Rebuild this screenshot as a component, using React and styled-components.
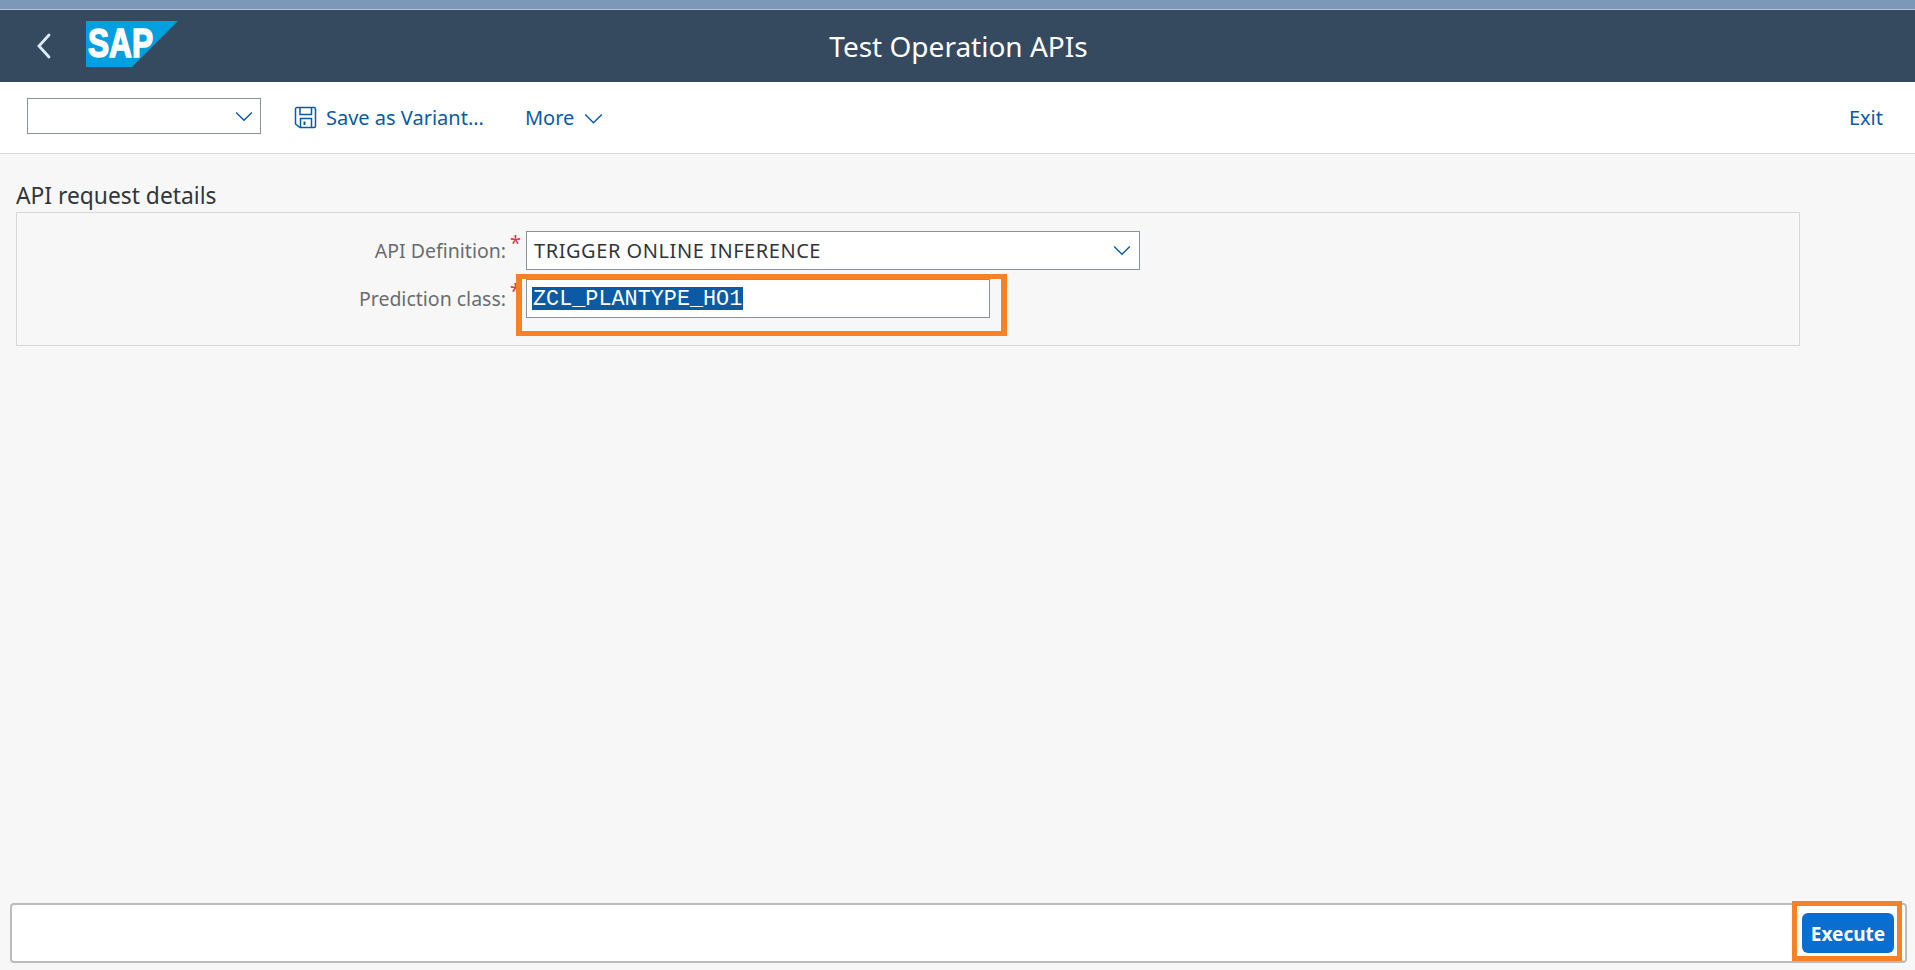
import styled, { createGlobalStyle } from "styled-components";

const GlobalStyle = createGlobalStyle`
  html, body {
    margin: 0;
    padding: 0;
    background: #f7f7f7;
  }
  body {
    font-family: "Noto Sans", "Open Sans", sans-serif;
  }
`;

const Page = styled.div`
  height: 970px;
  display: flex;
  flex-direction: column;
  overflow: hidden;
`;

const TopStrip = styled.div`
  height: 9px;
  background: #7b98b8;
  border-bottom: 1px solid #b4c4d6;
`;

const Header = styled.header`
  height: 72px;
  background: #354a5f;
  display: flex;
  align-items: center;
  padding-left: 36px;
`;

const BackButton = styled.svg`
  width: 16px;
  height: 26px;
  margin-right: 34px;
`;

const Logo = styled.svg`
  width: 92px;
  height: 46px;
  margin-bottom: 4px;
`;

const Title = styled.h1`
  flex: 1;
  margin: 0;
  padding-right: 176px;
  text-align: center;
  color: #fff;
  font-size: 28px;
  font-weight: 400;
  line-height: 72px;
`;

const Toolbar = styled.div`
  height: 71px;
  background: #fff;
  border-bottom: 1px solid #d9d9d9;
  display: flex;
  align-items: center;
  padding: 0 32px 0 27px;
`;

const VariantSelect = styled.div`
  width: 234px;
  height: 36px;
  box-sizing: border-box;
  background: #fff;
  border: 1px solid #89919a;
  display: flex;
  align-items: center;
  justify-content: flex-end;
  padding-right: 7px;
  margin: 0 33px 3px 0;
`;

const Action = styled.span`
  color: #0a5aa4;
  font-size: 20px;
  line-height: 36px;
  display: flex;
  align-items: center;
  gap: ${({ $gap }) => $gap || 0}px;
  margin-right: ${({ $right }) => $right || 0}px;
  margin-left: ${({ $auto }) => ($auto ? "auto" : 0)};
`;

const Content = styled.main`
  flex: 1;
  padding: 25px 115px 0 16px;
`;

const SectionTitle = styled.h2`
  margin: 0;
  color: #32363a;
  font-size: 22.8px;
  font-weight: 400;
  line-height: 33px;
`;

const Panel = styled.section`
  height: 134px;
  box-sizing: border-box;
  border: 1px solid #d9d9d9;
  padding-top: 18px;
  display: grid;
  grid-template-columns: 489px 20px auto;
  grid-auto-rows: 39px;
  row-gap: 9px;
  justify-content: start;
  align-items: start;
`;

const Label = styled.label`
  text-align: right;
  color: #6a6d70;
  font-size: 19.5px;
  line-height: 40px;
`;

const Required = styled.span`
  color: #d9364c;
  font-size: 20px;
  line-height: 24px;
  padding-left: 4px;
`;

const Field = styled.div`
  position: relative;
  width: ${({ $width }) => $width}px;
  height: ${({ $height }) => $height}px;
  box-sizing: border-box;
  background: #fff;
  border: 1px solid #89919a;
  display: flex;
  align-items: center;
  justify-content: space-between;
  padding: 0 8px 0 7px;
  color: #32363a;
  font-size: 20px;
  letter-spacing: 0.55px;
`;

const MonoValue = styled.span`
  margin-left: -2px;
  height: 23px;
  line-height: 25px;
  padding: 0 1px;
  background: #0a5aa4;
  color: #fff;
  font-family: "Liberation Mono", monospace;
  font-size: 21.8px;
  letter-spacing: 0;
`;

const Highlight = styled.div`
  position: absolute;
  top: ${({ $top }) => $top}px;
  right: ${({ $right }) => $right}px;
  bottom: ${({ $bottom }) => $bottom}px;
  left: ${({ $left }) => $left}px;
  border: 5px solid #f88125;
  border-left-width: ${({ $side }) => $side}px;
  border-right-width: ${({ $side }) => $side}px;
  pointer-events: none;
`;

const Footer = styled.footer`
  height: 60px;
  box-sizing: border-box;
  margin: 0 8px 7px 10px;
  background: #fff;
  border: 2px solid #bcbcbc;
  border-radius: 4px;
  display: flex;
  align-items: center;
  justify-content: flex-end;
  padding-right: 11px;
`;

const ExecuteWrap = styled.div`
  position: relative;
  display: flex;
`;

const ExecuteButton = styled.button`
  width: 92px;
  height: 40px;
  border: 0;
  border-radius: 6px;
  background: #0a6ed1;
  color: #fff;
  font-family: inherit;
  font-size: 19px;
  font-weight: 700;
  padding: 2px 0 0;
`;

const Chevron = ({ size = 18 }) => (
  <svg width={size} height={size * 0.6} viewBox="0 0 18 11" fill="none">
    <path d="M1 1.5 L9 9.5 L17 1.5" stroke="#0a5aa4" strokeWidth="1.4" />
  </svg>
);

const MoreChevron = styled.span`
  display: flex;
  padding-top: 3px;
`;

const SaveIcon = () => (
  <svg width="23" height="23" viewBox="0 0 23 23" fill="none" stroke="#0a5aa4" strokeWidth="1.5">
    <path d="M3 1.5 H20 A1.5 1.5 0 0 1 21.5 3 V20 A1.5 1.5 0 0 1 20 21.5 H6 L1.5 18 V3 A1.5 1.5 0 0 1 3 1.5 Z" />
    <path d="M6 1.5 V8.5 H17.5 V1.5" />
    <path d="M6.5 21.5 V12.5 H17.5 V21.5" />
    <path d="M10.5 15.5 V19" strokeWidth="2" />
  </svg>
);

const App = () => (
  <Page>
    <GlobalStyle />
    <TopStrip />
    <Header>
      <BackButton viewBox="0 0 16 26" fill="none">
        <path d="M13 2 L3 13 L13 24" stroke="#dcebfa" strokeWidth="2.8" strokeLinecap="round" />
      </BackButton>
      <Logo viewBox="0 0 92 46">
        <polygon points="0,0 92,0 46,46 0,46" fill="#009fdf" />
        <text
          x="2"
          y="36"
          fill="#fff"
          fontFamily="Liberation Sans"
          fontWeight="700"
          fontSize="40"
          textLength="65"
          lengthAdjust="spacingAndGlyphs"
          stroke="#fff"
          strokeWidth="1.6"
        >
          SAP
        </text>
      </Logo>
      <Title>Test Operation APIs</Title>
    </Header>
    <Toolbar>
      <VariantSelect>
        <Chevron />
      </VariantSelect>
      <Action $gap={9} $right={41}>
        <SaveIcon />
        Save as Variant...
      </Action>
      <Action $gap={10}>
        More
        <MoreChevron>
          <Chevron size={19} />
        </MoreChevron>
      </Action>
      <Action $auto>Exit</Action>
    </Toolbar>
    <Content>
      <SectionTitle>API request details</SectionTitle>
      <Panel>
        <Label>API Definition:</Label>
        <Required>*</Required>
        <Field $width={614} $height={39}>
          TRIGGER ONLINE INFERENCE
          <Chevron />
        </Field>
        <Label>Prediction class:</Label>
        <Required>*</Required>
        <Field $width={464} $height={39}>
          <MonoValue>ZCL_PLANTYPE_HO1</MonoValue>
          <Highlight $top={-6} $right={-18} $bottom={-19} $left={-11} $side={6} />
        </Field>
      </Panel>
    </Content>
    <Footer>
      <ExecuteWrap>
        <ExecuteButton>Execute</ExecuteButton>
        <Highlight $top={-12} $right={-8} $bottom={-8} $left={-10} $side={5} />
      </ExecuteWrap>
    </Footer>
  </Page>
);

export default App;
